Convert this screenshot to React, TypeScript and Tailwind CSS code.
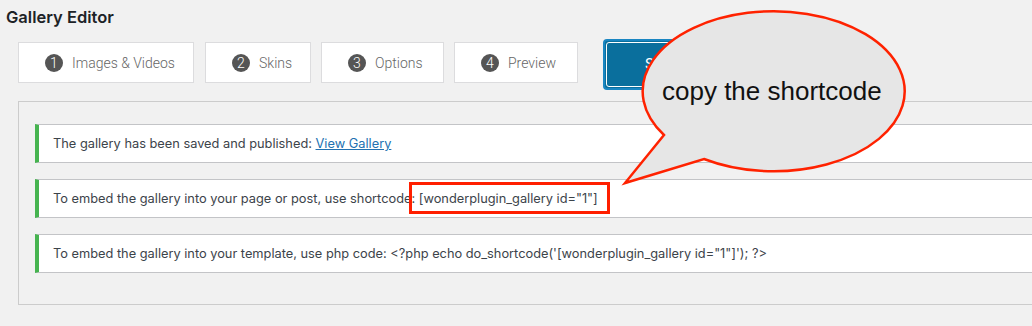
import React from "react";

const tabs = [
  { n: "1", label: "Images & Videos", w: "w-[176px]" },
  { n: "2", label: "Skins", w: "w-[106px]" },
  { n: "3", label: "Options", w: "w-[123px]" },
  { n: "4", label: "Preview", w: "w-[124px]" },
];

function Notice({ children }: { children: React.ReactNode }) {
  return (
    <div className="h-[39px] flex items-center bg-white border border-[#c3c4c7] border-l-4 border-l-[#46b450] pl-[14px] pt-px text-[12.8px] text-[#3c434a] font-['Inter',sans-serif] whitespace-nowrap">
      {children}
    </div>
  );
}

export default function App() {
  return (
    <div className="relative w-[1032px] h-[326px] bg-[#f1f1f1] overflow-hidden font-['Inter',sans-serif]">
      <h1 className="pl-[6px] pt-[6px] h-[30px] text-[16.5px] leading-[22px] font-semibold text-[#1d2327]">
        Gallery Editor
      </h1>
      <div className="flex items-start pl-[18px] pt-[9px]">
        <div className="flex gap-[10px] mt-[3px]">
          {tabs.map((t, i) => (
            <div
              key={t.n}
              className={`${t.w} h-[41px] bg-white border border-[#dcdcde] flex items-center pl-[26px] pt-px gap-[9px] ${i === 1 ? "ml-px" : ""}`}
            >
              <span className="w-[18px] h-[18px] rounded-full bg-[#555] text-white text-[14px] font-light flex items-center justify-center font-['Roboto',sans-serif]">
                {t.n}
              </span>
              <span className="text-[14px] font-light text-[#666] font-['Roboto',sans-serif]">{t.label}</span>
            </div>
          ))}
        </div>
        <div className="ml-[25px] w-[170px] h-[51px] rounded-[4px] border-2 border-[#1a86c2] bg-[#0a6f9d] p-px">
          <div className="w-full h-full rounded-[3px] border border-white flex items-center pl-[38px] text-[15px] text-white font-['Roboto',sans-serif]">
            Save &amp; Publish
          </div>
        </div>
      </div>
      <div className="ml-[18px] mt-[11px] w-[1100px] h-[204px] border border-[#cccccc] pt-[22px] pl-[16px] flex flex-col gap-[16px]">
        <Notice>
          The gallery has been saved and published:&nbsp;
          <a className="text-[#2271b1] underline">View Gallery</a>
        </Notice>
        <Notice>
          To embed the gallery into your page or post, use shortcode: [wonderplugin_gallery id="1"]
        </Notice>
        <Notice>
          To embed the gallery into your template, use php code: &lt;?php echo do_shortcode('[wonderplugin_gallery id="1"]'); ?&gt;
        </Notice>
      </div>

      {/* red highlight box */}
      <div className="absolute left-[409px] top-[182px] w-[201px] h-[32px] border-[3px] border-[#ff1f00]" />

      {/* speech bubble */}
      <svg className="absolute left-0 top-0 pointer-events-none" width="1032" height="326" viewBox="0 0 1032 326">
        <path
          d="M 664 135 L 625 183 L 704 159 A 131 80 0 1 0 664 135 Z"
          fill="#e6e6e6"
          stroke="#ff2200"
          strokeWidth="2.5"
          strokeLinejoin="miter"
        />
      </svg>
      <div className="absolute left-[662px] top-[76px] text-[26px] leading-[30px] text-[#111] font-['Liberation_Sans',sans-serif] whitespace-nowrap">
        copy the shortcode
      </div>
    </div>
  );
}
